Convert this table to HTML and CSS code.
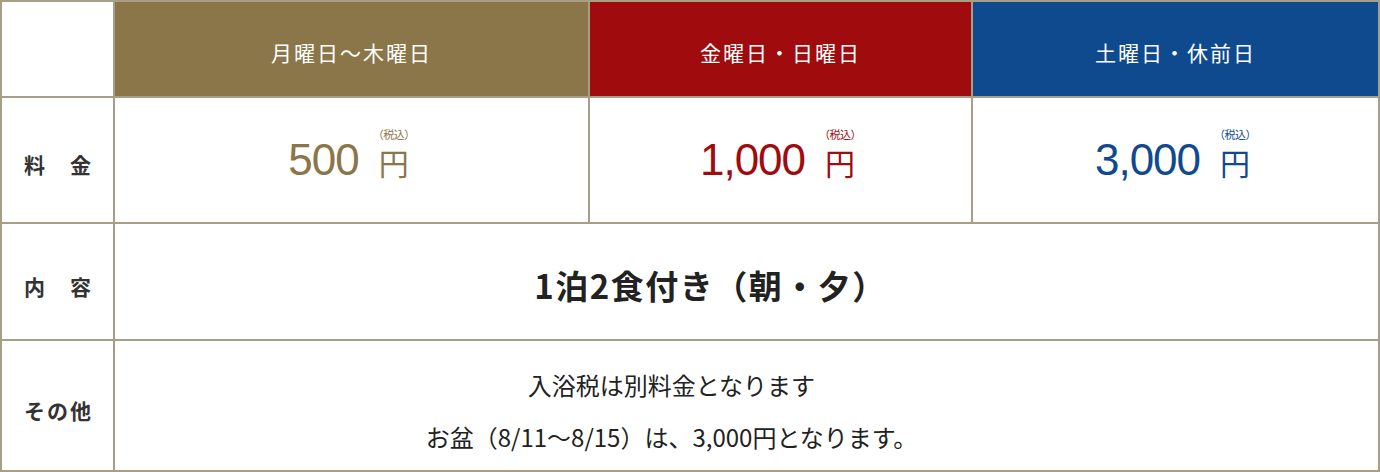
FILE: index.html
```html
<!DOCTYPE html>
<html lang="ja">
<head>
<meta charset="utf-8">
<title>料金表</title>
<link rel="stylesheet" href="styles.css">
</head>
<body>
<div class="table">
  <div class="cell corner"></div>
  <div class="cell head gold">月曜日〜木曜日</div>
  <div class="cell head red">金曜日・日曜日</div>
  <div class="cell head blue">土曜日・休前日</div>

  <div class="cell label">料　金</div>
  <div class="cell price gold-text"><div class="pv"><span class="num">500</span><span class="unit"><small>（税込）</small><span class="yen">円</span></span></div></div>
  <div class="cell price red-text"><div class="pv"><span class="num">1,000</span><span class="unit"><small>（税込）</small><span class="yen">円</span></span></div></div>
  <div class="cell price blue-text"><div class="pv"><span class="num">3,000</span><span class="unit"><small>（税込）</small><span class="yen">円</span></span></div></div>

  <div class="cell label">内　容</div>
  <div class="cell wide content">1泊2食付き（朝・夕）</div>

  <div class="cell label">その他</div>
  <div class="cell wide note">入浴税は別料金となります<br>お盆（8/11〜8/15）は、3,000円となります。</div>
</div>
</body>
</html>
```

FILE: styles.css
```css
html, body {
  margin: 0;
  padding: 0;
  background: #fff;
}

body {
  font-family: "Noto Sans CJK JP", "Noto Sans", sans-serif;
  color: #222;
}

.table {
  width: 1380px;
  height: 472px;
  box-sizing: border-box;
  display: grid;
  grid-template-columns: 111px 473px 381px 405px;
  grid-template-rows: 94px 124px 115px 129px;
  gap: 2px;
  padding: 2px;
  background: #a89e85;
}

.cell {
  background: #fff;
  display: flex;
  align-items: center;
  justify-content: center;
  text-align: center;
  box-sizing: border-box;
}

.wide {
  grid-column: 2 / 5;
}

.head {
  color: #fff;
  font-size: 21px;
  letter-spacing: 2px;
  padding-top: 6px;
}

.gold { background: #8a7649; }
.red { background: #a00b0e; }
.blue { background: #0f4a8f; }

.label {
  font-size: 21px;
  font-weight: bold;
  letter-spacing: 2px;
  color: #333;
  padding-top: 8px;
  padding-left: 2px;
}

.price {
  padding-bottom: 9px;
}

.pv {
  line-height: 1;
  white-space: nowrap;
}

.gold-text { color: #8a7649; }
.red-text { color: #a00b0e; }
.blue-text { color: #0f4a8f; }

.num {
  font-family: "Liberation Sans", Arial, sans-serif;
  font-size: 44px;
  letter-spacing: -1px;
  line-height: 1;
  vertical-align: baseline;
}

.unit {
  display: inline-block;
  margin-left: 14px;
  line-height: 1;
  text-align: center;
  vertical-align: baseline;
}

.unit small {
  display: block;
  font-size: 11px;
  line-height: 1;
  margin-bottom: 7px;
  letter-spacing: -0.5px;
}

.yen {
  display: block;
  font-size: 30px;
  line-height: 1;
}

.content {
  font-size: 33px;
  font-weight: bold;
  letter-spacing: 1.5px;
  padding-top: 6px;
  padding-right: 72px;
}

.note {
  font-size: 24px;
  line-height: 52px;
  color: #222;
  padding-top: 10px;
  padding-right: 150px;
}
```
